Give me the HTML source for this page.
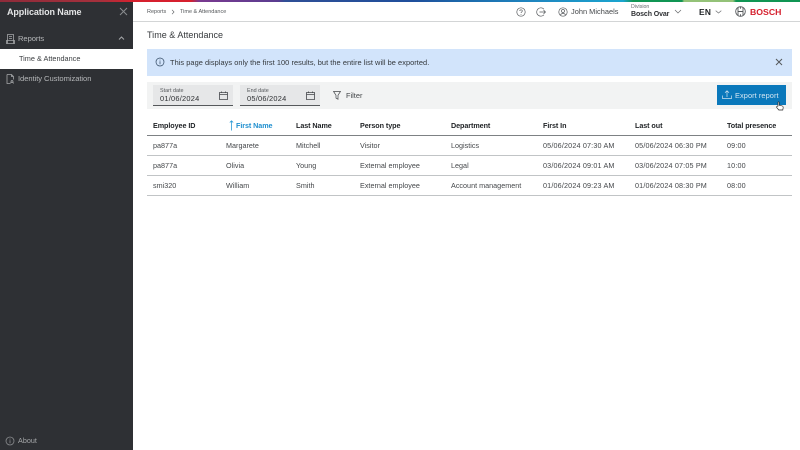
<!DOCTYPE html>
<html><head><meta charset="utf-8"><style>
html,body{margin:0;padding:0;background:#fff}
#p{position:relative;width:800px;height:450px;overflow:hidden;background:#fff;font-family:"Liberation Sans",sans-serif;color:#2e3033;filter:blur(.35px)}
#p div,#p svg{position:absolute}
.t{position:absolute;white-space:nowrap;font-size:7.2px;line-height:10px;color:#44474a;letter-spacing:.02px}
.d{letter-spacing:.17px}
.h{font-weight:bold;color:#1f2225;letter-spacing:-.07px}
.s{color:#c9cbcd;font-size:7.6px;letter-spacing:-.06px}
.l{left:147px;width:645px;height:1px;background:#c1c4c6}
svg{fill:none;stroke:currentColor;stroke-width:1}
</style></head><body><div id="p">
<div style="left:0;top:0;width:133px;height:450px;background:#2e3034"></div>
<div style="left:0;top:0;width:133px;height:2px;background:linear-gradient(90deg,#8e2b3a 0,#a5303c 100px,#d6202e 133px)"></div>
<div style="left:133px;top:0;width:667px;height:2px;background:linear-gradient(90deg,#d6202e 0,#d6202e 58px,#7a3a90 66px,#5a3c90 145px,#2f4f96 152px,#1f4f9c 280px,#1c69ab 330px,#1f86c0 400px,#1ba5cf 490px,#109553 500px,#109553 549px,#94c278 551px,#94c278 600px,#109553 603px,#109553 667px)"></div>
<span class="t" style="left:7px;top:6px;font-size:9px;line-height:13px;font-weight:bold;color:#e4e5e6;letter-spacing:-.1px">Application Name</span>
<svg style="left:119px;top:7px;width:9px;height:9px;color:#8a8c8f" viewBox="0 0 9 9"><path d="M1 1l7 7M8 1L1 8"/></svg>
<svg style="left:6px;top:34px;width:9px;height:10px;color:#a5a7a9;stroke-width:.8" viewBox="0 0 9 10"><path d="M1.5 .5h6v9h-6zM3 2.5h3M3 4.5h3M.5 6.5h8v3h-8z"/></svg>
<span class="t s" style="left:18px;top:34px;color:#b5b7b9">Reports</span>
<svg style="left:118px;top:36px;width:7px;height:5px;color:#a5a7a9" viewBox="0 0 7 5"><path d="M1 3.5l2.5-2.5 2.5 2.5"/></svg>
<div style="left:0;top:49px;width:133px;height:20px;background:#fff"></div>
<span class="t" style="left:19px;top:54px;color:#3a3d40;font-size:7.3px;letter-spacing:0">Time &amp; Attendance</span>
<svg style="left:6px;top:74px;width:9px;height:10px;color:#a5a7a9;stroke-width:.8" viewBox="0 0 9 10"><path d="M1 .5h4.5l2 2v3M1 .5v9h3M5.5 .5v2h2M6 6.5a1 1 0 1 0 .01 0M4.5 9.5c.3-1.8 2.7-1.8 3 0"/></svg>
<span class="t s" style="left:18px;top:74px;color:#b5b7b9">Identity Customization</span>
<svg style="left:5px;top:436px;width:10px;height:10px;color:#8a8c8f;stroke-width:.8" viewBox="0 0 10 10"><circle cx="5" cy="5" r="4"/><path d="M5 4.2v3M5 2.6v.9"/></svg>
<span class="t" style="left:18px;top:436px;color:#a5a7a9;font-size:7.2px">About</span>

<span class="t" style="left:147px;top:7px;font-size:5.5px;color:#55585b;letter-spacing:0">Reports</span>
<svg style="left:171px;top:9px;width:4px;height:6px;color:#66696c;stroke-width:.7" viewBox="0 0 4 6"><path d="M1 .8L3 3 1 5.2"/></svg>
<span class="t" style="left:180px;top:7px;font-size:5.5px;color:#55585b;letter-spacing:0">Time &amp; Attendance</span>
<div style="left:133px;top:21px;width:667px;height:1px;background:#d3d5d6"></div>
<svg style="left:516px;top:7px;width:10px;height:10px;color:#55585b;stroke-width:.7" viewBox="0 0 10 10"><circle cx="5" cy="5" r="4.2"/><path d="M3.8 4c0-1.6 2.5-1.6 2.5 0 0 1-1.3 1-1.3 2M5 7v.7"/></svg>
<svg style="left:536px;top:7px;width:10px;height:10px;color:#55585b;stroke-width:.7" viewBox="0 0 10 10"><path d="M8 2.2A4.2 4.2 0 1 0 8 7.8M3.5 5h6M7.5 3l2 2-2 2"/></svg>
<svg style="left:558px;top:7px;width:10px;height:10px;color:#55585b;stroke-width:.7" viewBox="0 0 10 10"><circle cx="5" cy="5" r="4.2"/><circle cx="5" cy="4" r="1.5"/><path d="M2.5 8c.6-2 4.4-2 5 0"/></svg>
<span class="t" style="left:571px;top:7px;font-size:7.4px;color:#44474a;letter-spacing:.02px">John Michaels</span>
<span class="t" style="left:631px;top:2px;font-size:5.2px;color:#66696c">Division</span>
<span class="t h" style="left:631px;top:10px;font-size:7px;color:#2e3033;letter-spacing:-.1px">Bosch Ovar</span>
<svg style="left:674px;top:9px;width:8px;height:5px;color:#66696c;stroke-width:.7" viewBox="0 0 8 5"><path d="M1 1l3 3 3-3"/></svg>
<span class="t h" style="left:699px;top:7px;font-size:8.4px;letter-spacing:.3px">EN</span>
<svg style="left:715px;top:10px;width:7px;height:4px;color:#77797c;stroke-width:.7" viewBox="0 0 7 4"><path d="M.7.7L3.5 3 6.3.7"/></svg>
<svg style="left:735px;top:6px;width:11px;height:11px;color:#55585b;stroke-width:.9" viewBox="0 0 11 11"><circle cx="5.5" cy="5.5" r="4.8"/><path d="M3 1.5v8M8 1.5v8M3 5.5h5M5.5 .8v2M5.5 8.2v2"/></svg>
<span class="t" style="left:750px;top:6px;font-size:8.7px;line-height:12px;font-weight:bold;color:#d5202e;letter-spacing:0">BOSCH</span>

<span class="t" style="left:147px;top:29px;font-size:9px;line-height:12px;color:#36393c;letter-spacing:.02px">Time &amp; Attendance</span>
<div style="left:147px;top:49px;width:645px;height:27px;background:#d2e4fb"></div>
<svg style="left:155px;top:57px;width:10px;height:10px;color:#2f4660;stroke-width:.7" viewBox="0 0 10 10"><circle cx="5" cy="5" r="4"/><path d="M5 4.2v3M5 2.6v.9"/></svg>
<span class="t" style="left:170px;top:58px;font-size:7.4px;color:#33373b;letter-spacing:.05px">This page displays only the first 100 results, but the entire list will be exported.</span>
<svg style="left:775px;top:58px;width:8px;height:8px;color:#55585b" viewBox="0 0 8 8"><path d="M1 1l6 6M7 1L1 7"/></svg>

<div style="left:147px;top:82px;width:645px;height:27px;background:#f2f3f3"></div>
<div style="left:153px;top:85px;width:80px;height:20px;background:#e6e7e8;border-bottom:1px solid #55585b"></div>
<span class="t" style="left:160px;top:88px;font-size:5.4px;line-height:7px;color:#55585b">Start date</span>
<span class="t" style="left:160px;top:94px;font-size:7.4px;color:#2e3033;letter-spacing:.25px">01/06/2024</span>
<svg style="left:219px;top:91px;width:9px;height:9px;color:#44474a;stroke-width:.8" viewBox="0 0 9 9"><path d="M.5 1.5h8v7h-8zM.5 3.5h8M2.5 .5v1.5M6.5 .5v1.5"/></svg>
<div style="left:240px;top:85px;width:80px;height:20px;background:#e6e7e8;border-bottom:1px solid #55585b"></div>
<span class="t" style="left:247px;top:88px;font-size:5.4px;line-height:7px;color:#55585b">End date</span>
<span class="t" style="left:247px;top:94px;font-size:7.4px;color:#2e3033;letter-spacing:.25px">05/06/2024</span>
<svg style="left:306px;top:91px;width:9px;height:9px;color:#44474a;stroke-width:.8" viewBox="0 0 9 9"><path d="M.5 1.5h8v7h-8zM.5 3.5h8M2.5 .5v1.5M6.5 .5v1.5"/></svg>
<svg style="left:333px;top:91px;width:8px;height:9px;color:#44474a;stroke-width:.7" viewBox="0 0 8 9"><path d="M.5.5h7L5 4.2v4L3 7V4.2z"/></svg>
<span class="t" style="left:346px;top:91px;font-size:7.4px;color:#44474a;letter-spacing:0">Filter</span>
<div style="left:717px;top:85px;width:69px;height:20px;background:#0a78bb"></div>
<svg style="left:722px;top:90px;width:10px;height:10px;color:#cfe3f0;stroke-width:.7" viewBox="0 0 10 10"><path d="M.5 5.5v3h9v-3M5 7V1M3 2.8L5 .8l2 2"/></svg>
<span class="t" style="left:735px;top:91px;font-size:7.4px;color:#d5e6f2;letter-spacing:.07px">Export report</span>
<svg style="left:776px;top:101px;width:8px;height:10px;color:#222;stroke-width:.8" viewBox="0 0 10 12"><path d="M2.5 6V1.5c0-1 1.5-1 1.5 0V5l4 1c1 .3 1 1 1 2l-.5 3H3.5L1 8c-.7-1 .5-2 1.5-2z" fill="#fff"/></svg>

<span class="t h" style="left:153px;top:121px">Employee ID</span>
<svg style="left:229px;top:120px;width:5px;height:11px;color:#2a9ad6;stroke-width:.8" viewBox="0 0 5 11"><path d="M2.5 10.5V1M.8 2.5L2.5 .8l1.7 1.7"/></svg>
<span class="t h" style="left:236px;top:121px;color:#1f8fcf">First Name</span>
<span class="t h" style="left:296px;top:121px">Last Name</span>
<span class="t h" style="left:360px;top:121px">Person type</span>
<span class="t h" style="left:451px;top:121px">Department</span>
<span class="t h" style="left:543px;top:121px">First In</span>
<span class="t h" style="left:635px;top:121px">Last out</span>
<span class="t h" style="left:727px;top:121px">Total presence</span>
<div class="l" style="top:135px;background:#7d8184"></div>

<span class="t" style="left:153px;top:141px">pa877a</span><span class="t" style="left:226px;top:141px">Margarete</span><span class="t" style="left:296px;top:141px">Mitchell</span><span class="t" style="left:360px;top:141px">Visitor</span><span class="t" style="left:451px;top:141px">Logistics</span><span class="t d" style="left:543px;top:141px">05/06/2024 07:30 AM</span><span class="t d" style="left:635px;top:141px">05/06/2024 06:30 PM</span><span class="t d" style="left:727px;top:141px">09:00</span>
<div class="l" style="top:155px"></div>
<span class="t" style="left:153px;top:161px">pa877a</span><span class="t" style="left:226px;top:161px">Olivia</span><span class="t" style="left:296px;top:161px">Young</span><span class="t" style="left:360px;top:161px">External employee</span><span class="t" style="left:451px;top:161px">Legal</span><span class="t d" style="left:543px;top:161px">03/06/2024 09:01 AM</span><span class="t d" style="left:635px;top:161px">03/06/2024 07:05 PM</span><span class="t d" style="left:727px;top:161px">10:00</span>
<div class="l" style="top:175px"></div>
<span class="t" style="left:153px;top:181px">smi320</span><span class="t" style="left:226px;top:181px">William</span><span class="t" style="left:296px;top:181px">Smith</span><span class="t" style="left:360px;top:181px">External employee</span><span class="t" style="left:451px;top:181px">Account management</span><span class="t d" style="left:543px;top:181px">01/06/2024 09:23 AM</span><span class="t d" style="left:635px;top:181px">01/06/2024 08:30 PM</span><span class="t d" style="left:727px;top:181px">08:00</span>
<div class="l" style="top:195px"></div>
</div></body></html>
